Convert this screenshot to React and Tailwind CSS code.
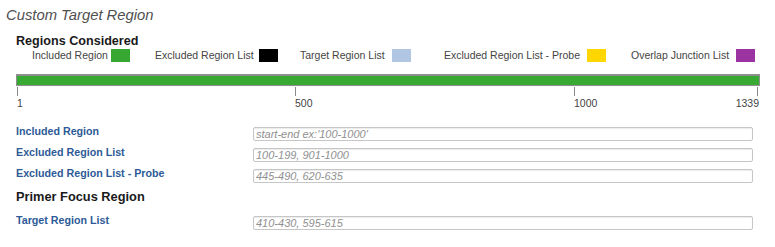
import React from "react";

const legend = [
  { label: "Included Region", color: "bg-[#36a832]", w: "w-[123px]", tw: "w-[79px]" },
  { label: "Excluded Region List", color: "bg-[#000000]", w: "w-[145px]", tw: "w-[104px]" },
  { label: "Target Region List", color: "bg-[#b0c6e2]", w: "w-[144px]", tw: "w-[92px]" },
  { label: "Excluded Region List - Probe", color: "bg-[#ffd600]", w: "w-[187px]", tw: "w-[143px]" },
  { label: "Overlap Junction List", color: "bg-[#9b33a0]", w: "w-[130px]", tw: "w-[105px]" },
];

function Field({ label, placeholder, className = "" }) {
  return (
    <div className={"flex items-start " + className}>
      <div className="w-[237px] text-[10.7px] leading-[12px] font-bold text-[#2d5b97]">{label}</div>
      <input
        className="mt-[2px] h-[14px] w-[500px] rounded-[2px] border border-[#c6c6c6] bg-white px-[2px] text-[11px] leading-[12px] italic text-[#555] placeholder:text-[#909090] outline-none shadow-[inset_0_1px_1px_rgba(0,0,0,0.08)]"
        placeholder={placeholder}
      />
    </div>
  );
}

export default function App() {
  const ticks = [
    { x: 17, label: "1", align: "left" },
    { x: 295, label: "500", align: "left" },
    { x: 574, label: "1000", align: "left" },
    { x: 757, label: "1339", align: "right" },
  ];
  return (
    <div className="w-[775px] h-[247px] overflow-hidden bg-white font-['Liberation_Sans',Arial,sans-serif]">
      <div className="pl-[6px] pt-[7px] text-[14.8px] leading-[16px] italic text-[#505050]">Custom Target Region</div>
      <div className="mt-[11px] pl-[16px] text-[12.6px] leading-[14px] font-bold text-[#1a1a1a]">Regions Considered</div>
      <div className="flex h-[14px] items-center pl-[32px]">
        {legend.map((l) => (
          <div key={l.label} className={"flex items-center " + l.w}>
            <span className={"whitespace-nowrap text-[10.5px] leading-[12px] text-[#444] " + l.tw}>{l.label}</span>
            <span className={"inline-block h-[13px] w-[19px] " + l.color}></span>
          </div>
        ))}
      </div>
      <div className="ml-[16px] mt-[12px] h-[12px] w-[744px] border border-t-2 border-[#8f8f8f] bg-[#38a933]"></div>
      <div className="relative h-[24px] w-[775px]">
        {ticks.map((t) => (
          <div key={t.label}>
            <div className="absolute top-[1px] h-[9px] w-px bg-[#8a8a8a]" style={{ left: t.x }}></div>
            <div
              className="absolute top-[11px] text-[10.5px] leading-[12px] text-[#444]"
              style={t.align === "left" ? { left: t.x } : { right: 775 - (t.x + 2) }}
            >
              {t.label}
            </div>
          </div>
        ))}
      </div>
      <div className="mt-[15px] pl-[16px]">
        <Field label="Included Region" placeholder="start-end ex:'100-1000'" />
        <Field label="Excluded Region List" placeholder="100-199, 901-1000" className="mt-[5px]" />
        <Field label="Excluded Region List - Probe" placeholder="445-490, 620-635" className="mt-[5px]" />
        <div className="mt-[7px] text-[12.8px] leading-[14px] font-bold text-[#1a1a1a]">Primer Focus Region</div>
        <Field label="Target Region List" placeholder="410-430, 595-615" className="mt-[10px]" />
      </div>
    </div>
  );
}
